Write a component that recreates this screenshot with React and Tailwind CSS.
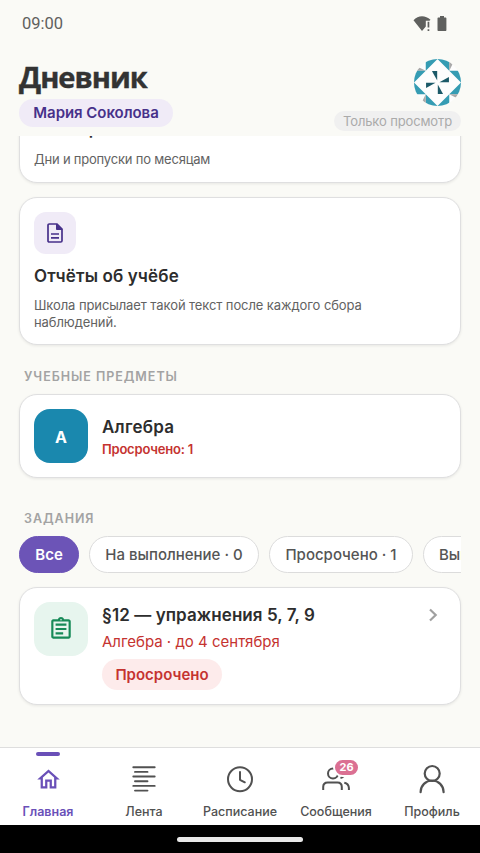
import React, { useState } from 'react';
import { MdOutlineAssignment, MdOutlineHome } from 'react-icons/md';

const filters = [
  { id: 'all', label: 'Все', className: 'w-[60px]' },
  { id: 'todo', label: 'На выполнение · 0', className: 'w-[170px]' },
  { id: 'overdue', label: 'Просрочено · 1', className: 'w-[144px]' },
  { id: 'done', label: 'Выполнено · 0', className: 'w-[138px]' },
];

const StatusBar = () => (
  <div className="flex h-[47px] items-center justify-between pl-[22px] pr-[33px] text-[#5f605e]">
    <span className="font-[Roboto] text-[16.5px] leading-5">09:00</span>
    <div className="flex items-center gap-[6px]">
      <svg width="18" height="16" viewBox="0 0 18 16" fill="currentColor">
        <path d="M.5 4.2C5-.9 12.500-1 17.500 3.800L16.500 4.800H12.800V10.500L9 15Z" />
        <path d="M14.600 5.800h1.700v5.700h-1.700zM14.600 13.200h1.700v1.700h-1.700z" />
      </svg>
      <svg width="10" height="16" viewBox="0 0 10 16" fill="currentColor">
        <path d="M3 0h4v1.600h1.400c.6 0 1 .4 1 1V14c0 .6-.4 1-1 1H1.500c-.6 0-1-.4-1-1V2.600c0-.6.4-1 1-1H3z" />
      </svg>
    </div>
  </div>
);

const Avatar = () => (
  <svg width="47" height="47" viewBox="0 0 48 48">
    <defs>
      <clipPath id="avatar-circle">
        <circle cx="24" cy="24" r="24" />
      </clipPath>
    </defs>
    <g clipPath="url(#avatar-circle)">
      <rect width="48" height="48" fill="#fdfdfd" />
      {[0, 90, 180, 270].map((angle) => (
        <g key={angle} transform={`rotate(${angle} 24 24)`}>
          <path d="M0 6L12 12H0z" fill="#a9a9a9" />
          <path d="M12 0H24L12 12zM36 0H24L36 12z" fill="#359cb3" />
          <path d="M18.300 12.300H23.700V22z" fill="#1b5968" />
        </g>
      ))}
    </g>
  </svg>
);

const Header = () => (
  <header className="flex h-[89px] justify-between px-[19px]">
    <div className="flex flex-col items-start pt-[12px]">
      <h1 className="h-[40px] font-['Open_Sans'] text-[29px] font-bold leading-[36px] tracking-[-1px] text-[#333] [-webkit-text-stroke:0.4px_#333] [stroke-linejoin:round]">
        Дневник
      </h1>
      <span className="flex h-[28px] w-[154px] items-center justify-center rounded-full bg-[#f0ebf7] pt-px text-[15px] font-semibold tracking-[-0.05px] text-[#47318a]">
        Мария Соколова
      </span>
    </div>
    <div className="flex flex-col items-end pt-[12px]">
      <Avatar />
      <span className="mt-[5px] flex h-[20px] w-[127px] items-center justify-center rounded-full bg-[#f0f0f0] pt-px text-[13px] tracking-[-0.13px] text-[#aaa]">
        Только просмотр
      </span>
    </div>
  </header>
);

const Card = ({ className, children }) => (
  <div className={`rounded-[18px] border border-[#dfdfe0] bg-white shadow-[0_1px_3px_rgba(0,0,0,0.08)] ${className}`}>
    {children}
  </div>
);

const SectionTitle = ({ children }) => (
  <h2 className="pl-[5px] text-[12.5px] font-semibold leading-4 tracking-[0.96px] text-[#a3a3a3]">{children}</h2>
);

const ReportIcon = () => (
  <svg width="16" height="20" viewBox="0 0 16 20" fill="none" stroke="#47318a" strokeWidth="1.7">
    <path d="M2.300 1H10L15 6V17.700Q15 19 13.700 19H2.300Q1 19 1 17.700V2.300Q1 1 2.300 1Z" />
    <path d="M9.500 1V6.500H15Z" fill="#47318a" strokeWidth="1" />
    <path d="M4 11H12M4 14.800H12" />
  </svg>
);

const FeedIcon = () => (
  <svg width="26" height="28" viewBox="0 0 26 28" fill="none" stroke="currentColor" strokeWidth="1.900" strokeLinecap="round">
    <path d="M2.300 2.200H23.700M4 6.900H16.500M2.300 11.500H23.700M4 16.200H16.500M2.300 20.900H23.700M4 25.600H16.500" />
  </svg>
);

const ClockIcon = () => (
  <svg width="28" height="28" viewBox="0 0 28 28" fill="none" stroke="currentColor" strokeWidth="2" strokeLinecap="round" strokeLinejoin="round">
    <circle cx="14" cy="14.300" r="12" />
    <path d="M14 7V14.800L18.800 17.300" />
  </svg>
);

const MessagesIcon = () => (
  <svg width="28" height="28" viewBox="0 0 28 28" fill="none" stroke="currentColor" strokeWidth="2" strokeLinecap="butt">
    <circle cx="11" cy="8.500" r="5" />
    <path d="M1.200 25V22Q1.200 17.500 5.700 17.500H15.500Q19.800 17.500 19.800 22V25" />
    <path d="M18.500 12.900Q20.300 12.500 21.500 11.200M22.300 17.800Q26.700 18.800 26.900 23V25" />
  </svg>
);

const ProfileIcon = () => (
  <svg width="28" height="30" viewBox="0 0 28 30" fill="none" stroke="currentColor" strokeWidth="2.200" strokeLinecap="round">
    <circle cx="14.200" cy="9.500" r="7.500" />
    <path d="M2.600 28.200V28A11.500 11.500 0 0 1 25.600 28V28.200" />
  </svg>
);

const tabs = [
  { id: 'home', label: 'Главная', icon: <MdOutlineHome size={27} /> },
  { id: 'feed', label: 'Лента', icon: <FeedIcon /> },
  { id: 'schedule', label: 'Расписание', icon: <ClockIcon /> },
  { id: 'messages', label: 'Сообщения', icon: <MessagesIcon />, badge: 26 },
  { id: 'profile', label: 'Профиль', icon: <ProfileIcon /> },
];

const TabBar = ({ active, onChange }) => (
  <nav className="flex h-[78px] flex-none border-t border-[#dedede] bg-white">
    {tabs.map((tab) => (
      <button
        key={tab.id}
        onClick={() => onChange(tab.id)}
        className={`flex flex-1 flex-col items-center pt-[4px] text-[12.5px] ${
          tab.id === active ? 'font-semibold text-[#6a50b8]' : 'font-medium text-[#515151]'
        }`}
      >
        <span className={`h-[4px] w-[24px] rounded-full ${tab.id === active ? 'bg-[#6a50b8]' : ''}`}></span>
        <span className="relative flex h-[46px] items-center justify-center">
          {tab.icon}
          {tab.badge && (
            <span className="absolute left-[11px] top-[2px] flex h-[19px] w-[27px] items-center justify-center rounded-full border-2 border-white bg-[#db7093] text-[11px] font-bold text-white">
              {tab.badge}
            </span>
          )}
        </span>
        <span className="pt-px leading-[18px]">{tab.label}</span>
      </button>
    ))}
  </nav>
);

const App = () => {
  const [filter, setFilter] = useState('all');
  const [tab, setTab] = useState('home');

  return (
    <div className="flex h-[853px] w-[480px] flex-col overflow-hidden bg-[#fafaf6] font-['Inter','Liberation_Sans',sans-serif]">
      <StatusBar />
      <Header />

      <main className="flex min-h-0 flex-1 flex-col overflow-hidden px-[19px]">
        {/* Attendance card, scrolled halfway under the header */}
        <div className="-mx-1 flex h-[51px] flex-none flex-col justify-end overflow-hidden px-1 pb-1">
          <Card className="flex-none px-[14px] pb-[14px] pt-[60px]">
            <h3 className="text-[17px] font-semibold leading-6 tracking-[0.1px] text-[#2d2d2d]">Посещаемость</h3>
            <p className="pt-[10px] text-[13px] leading-[17px] tracking-[-0.2px] text-[#626262]">Дни и пропуски по месяцам</p>
          </Card>
        </div>

        <Card className="mt-[10px] h-[148px] flex-none px-[14px] pt-[14px]">
          <div className="flex h-[42px] w-[42px] items-center justify-center rounded-[12px] bg-[#f0ebf7]">
            <ReportIcon />
          </div>
          <h3 className="mt-[10px] text-[17px] font-semibold leading-6 tracking-[0.13px] text-[#2d2d2d]">Отчёты об учёбе</h3>
          <p className="mt-[9px] w-[360px] text-[13px] leading-[16.5px] tracking-[-0.09px] text-[#626262]">
            Школа присылает такой текст после каждого сбора наблюдений.
          </p>
        </Card>

        <div className="mt-[24px] flex-none">
          <SectionTitle>УЧЕБНЫЕ ПРЕДМЕТЫ</SectionTitle>
        </div>
        <Card className="mt-[9px] flex h-[84px] flex-none items-center gap-[14px] px-[14px]">
          <div className="flex h-[54px] w-[54px] items-center justify-center rounded-[16px] bg-[#1a88ae] pt-[2px] text-[16px] font-bold text-white">
            A
          </div>
          <div className="pt-[2px]">
            <h3 className="text-[17px] font-semibold leading-6 tracking-[0.25px] text-[#2d2d2d]">Алгебра</h3>
            <p className="text-[13px] font-semibold leading-5 tracking-[-0.2px] text-[#c53330]">Просрочено: 1</p>
          </div>
        </Card>

        <div className="mt-[33px] flex-none">
          <SectionTitle>ЗАДАНИЯ</SectionTitle>
        </div>
        <div className="mt-[9px] flex flex-none gap-[10px] overflow-hidden">
          {filters.map((item) => (
            <button
              key={item.id}
              onClick={() => setFilter(item.id)}
              className={`h-[37px] flex-none rounded-full border pt-px text-[15px] ${item.className} ${
                item.id === filter
                  ? 'border-[#6c54b7] bg-[#6c54b7] font-semibold text-white'
                  : 'border-[#dcdcdc] bg-white font-medium text-[#555]'
              }`}
            >
              {item.label}
            </button>
          ))}
        </div>

        <Card className="mt-[14px] flex h-[118px] flex-none gap-[14px] p-[14px]">
          <div className="flex h-[54px] w-[54px] flex-none items-center justify-center rounded-[16px] bg-[#e7f5ee] text-[#178a58]">
            <MdOutlineAssignment size={26} />
          </div>
          <div className="flex flex-1 flex-col items-start">
            <h3 className="pt-[1px] text-[17px] font-semibold leading-6 tracking-[0.08px] text-[#2d2d2d]">§12 — упражнения 5, 7, 9</h3>
            <p className="mt-[5px] text-[15px] leading-5 text-[#c53330]">Алгебра · до 4 сентября</p>
            <span className="mt-[7px] flex h-[31px] w-[120px] items-center justify-center rounded-full bg-[#fdebeb] pt-px text-[15px] font-semibold text-[#c53330]">
              Просрочено
            </span>
          </div>
          <svg className="mr-[7px] mt-[6px]" width="12" height="14" viewBox="0 0 12 14" fill="none" stroke="#a0a0a0" strokeWidth="2.200">
            <path d="M3 1.500L8.700 7L3 12.500" />
          </svg>
        </Card>
      </main>

      <TabBar active={tab} onChange={setTab} />
      <div className="flex h-[28px] flex-none items-center justify-center bg-black">
        <div className="h-[5px] w-[126px] rounded-full bg-[#e8e8e8]"></div>
      </div>
    </div>
  );
};

export default App;
